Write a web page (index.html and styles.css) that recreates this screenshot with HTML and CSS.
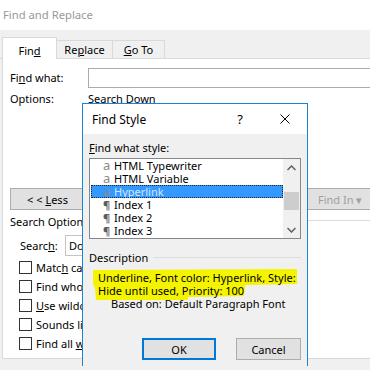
FILE: index.html
```html
<!DOCTYPE html>
<html>

<head>
  <title>Find and Replace</title>

  <link rel="stylesheet" href="styles.css">
</head>

<body>
  <div class="window">
    <div class="titlebar">Find and Replace</div>

    <div class="tabs">
      <div class="tab tab--active">Fin<u>d</u></div>
      <div class="tab tab--replace">Re<u>p</u>lace</div>
      <div class="tab tab--goto"><u>G</u>o To</div>
    </div>

    <div class="panel">
      <div class="field-grid">
        <label class="field-label">Fi<u>n</u>d what:</label>
        <div class="text-input"></div>
        <span class="field-label field-label--small">Options:</span>
        <span class="field-label field-label--small">Search Down</span>
      </div>

      <div class="button-row">
        <button class="btn btn--less">&lt; &lt; <u>L</u>ess</button>
        <button class="btn btn--findin" disabled>Find In &#9662;</button>
      </div>

      <!-- Search options group -->
      <div class="group-title">
        <span>Search Options</span>
        <span class="group-line"></span>
      </div>

      <div class="search-row">
        <span class="search-label">Searc<u>h</u>:</span>
        <div class="select">Down</div>
      </div>

      <ul class="check-list">
        <li><span class="checkbox"></span><span>Matc<u>h</u> case</span></li>
        <li><span class="checkbox"></span><span>Find whole words onl<u>y</u></span></li>
        <li><span class="checkbox"></span><span><u>U</u>se wildcards</span></li>
        <li><span class="checkbox"></span><span>Sounds li<u>k</u>e (English)</span></li>
        <li><span class="checkbox"></span><span>Find all <u>w</u>ord forms (English)</span></li>
      </ul>
    </div>
  </div>

  <!-- Find Style dialog, sits over the main window -->
  <div class="find-style">
    <div class="fs-titlebar">
      <span class="fs-title">Find Style</span>
      <span class="fs-help">?</span>
      <span class="fs-close">
        <svg width="10" height="10" viewBox="0 0 10 10">
          <path d="M0.5 0.5 L9.5 9.5 M9.5 0.5 L0.5 9.5" stroke="#000" stroke-width="1" fill="none" />
        </svg>
      </span>
    </div>

    <div class="fs-body">
      <label class="fs-label"><u>F</u>ind what style:</label>

      <div class="style-list">
        <ul class="style-items">
          <li class="style-item"><span class="style-icon style-icon--char">a</span>HTML Typewriter</li>
          <li class="style-item"><span class="style-icon style-icon--char">a</span>HTML Variable</li>
          <li class="style-item style-item--selected"><span class="style-icon style-icon--char">a</span>Hyperlink</li>
          <li class="style-item"><span class="style-icon style-icon--para">&para;</span>Index 1</li>
          <li class="style-item"><span class="style-icon style-icon--para">&para;</span>Index 2</li>
          <li class="style-item"><span class="style-icon style-icon--para">&para;</span>Index 3</li>
        </ul>
        <div class="scrollbar">
          <span class="scroll-arrow">
            <svg width="9" height="6" viewBox="0 0 9 6">
              <path d="M0.5 5 L4.5 1 L8.5 5" stroke="#606060" stroke-width="1.5" fill="none" />
            </svg>
          </span>
          <div class="scroll-track">
            <div class="scroll-thumb"></div>
          </div>
          <span class="scroll-arrow">
            <svg width="9" height="6" viewBox="0 0 9 6">
              <path d="M0.5 1 L4.5 5 L8.5 1" stroke="#606060" stroke-width="1.5" fill="none" />
            </svg>
          </span>
        </div>
      </div>

      <div class="desc-head">
        <span>Description</span>
        <span class="desc-line"></span>
      </div>

      <div class="desc-text">
        <svg class="marker" width="220" height="34" viewBox="0 -3 220 34">
          <path d="M4 -1 L208 -2 L208 13 L156 14 L155 25 L99 26 L99 29 L7 29 L6 17 L4 13 Z" fill="#f4f400" />
        </svg>
        <div>Underline, Font color: Hyperlink, Style:</div>
        <div>Hide until used, Priority: 100</div>
        <div class="desc-based">Based on: Default Paragraph Font</div>
      </div>

      <div class="fs-buttons">
        <button class="fs-btn fs-btn--ok">OK</button>
        <button class="fs-btn fs-btn--cancel">Cancel</button>
      </div>
    </div>
  </div>
</body>

</html>
```

FILE: styles.css
```css
* {
  margin: 0;
  padding: 0;
  box-sizing: border-box;
}

body {
  font-family: 'Noto Sans', sans-serif;
  font-size: 11px;
  color: #000;
  background-color: #fff;
}

:root {
  --face: #f0f0f0;
  --tab-border: #d9d9d9;
  --btn: #e1e1e1;
  --btn-border: #adadad;
  --accent: #0078d7;
}

u {
  text-underline-offset: 1px;
}

.window {
  position: relative;
  width: 370px;
  height: 370px;
  overflow: hidden;
  background-color: var(--face);
}

.titlebar {
  height: 30px;
  line-height: 30px;
  padding-left: 3px;
  background-color: #fff;
  color: #999;
  font-size: 11.25px;
}

/* Tabs */
.tabs {
  display: flex;
  align-items: flex-end;
  height: 29px;
  padding-left: 2px;
  border-bottom: 1px solid var(--tab-border);
}

.tab {
  height: 18px;
  line-height: 17px;
  text-align: center;
  border: 1px solid var(--tab-border);
  border-bottom: none;
  background-color: var(--face);
  margin-left: -1px;
}

.tab--active {
  width: 55px;
  height: 22px;
  padding-top: 4px;
  margin-left: 0;
  margin-bottom: -1px;
  background-color: #fff;
}

.tab--replace {
  width: 57px;
}

.tab--goto {
  width: 53px;
}

/* Tab page */
.panel {
  width: 420px;
  height: 300px;
  margin-left: 2px;
  padding: 9px 0 0 7px;
  background-color: #fff;
  border-left: 1px solid var(--tab-border);
  border-bottom: 1px solid var(--tab-border);
}

.field-grid {
  display: grid;
  grid-template-columns: 78px 1fr;
  row-gap: 2px;
}

.field-label {
  line-height: 20px;
}

.field-label--small {
  line-height: 18px;
}

.text-input {
  height: 20px;
  border: 1px solid #ababab;
  background-color: #fff;
}

.button-row {
  display: flex;
  gap: 215px;
  margin-top: 80px;
}

.btn {
  height: 22px;
  font: inherit;
  color: #000;
  background-color: var(--btn);
  border: 1px solid var(--btn-border);
}

.btn--less {
  width: 75px;
}

.btn--findin {
  width: 80px;
  text-align: left;
  padding-left: 17px;
  color: #a0a0a0;
}

.group-title {
  display: flex;
  align-items: center;
  margin-top: 4px;
  line-height: 16px;
}

.group-line {
  flex: 1;
  height: 1px;
  margin: -3px 0 0 6px;
  background-color: #dcdcdc;
}

.search-row {
  display: flex;
  align-items: center;
  margin-top: 5px;
  padding-left: 10px;
}

.search-label {
  width: 45px;
}

.select {
  width: 150px;
  height: 21px;
  line-height: 19px;
  padding-left: 3px;
  border: 1px solid #c4c4c4;
}

.check-list {
  list-style: none;
  margin-top: 2px;
  padding-left: 9px;
}

.check-list li {
  display: flex;
  align-items: center;
  gap: 4px;
  height: 19px;
  white-space: nowrap;
}

.checkbox {
  flex: none;
  width: 13px;
  height: 13px;
  border: 1px solid #333;
  background-color: #fff;
}

/* Find Style dialog */
.find-style {
  position: absolute;
  left: 82px;
  top: 103px;
  width: 226px;
  height: 263px;
  display: flex;
  flex-direction: column;
  background-color: var(--face);
  border: 1px solid #1883d7;
  border-bottom: none;
}

.fs-titlebar {
  display: flex;
  align-items: center;
  height: 30px;
  background-color: #fff;
}

.fs-title {
  flex: 1;
  padding-left: 9px;
  font-size: 12px;
}

.fs-help {
  width: 46px;
  text-align: center;
  font-size: 13px;
}

.fs-close {
  width: 44px;
  display: flex;
  justify-content: center;
}

.fs-body {
  flex: 1;
  display: flex;
  flex-direction: column;
  padding: 6px 6px 6px;
}

.fs-label {
  line-height: 16px;
}

.style-list {
  display: flex;
  height: 81px;
  margin-top: 2px;
  border: 1px solid #828790;
  background-color: #fff;
}

.style-items {
  flex: 1;
  list-style: none;
  padding-left: 1px;
}

.style-item {
  display: flex;
  height: 13px;
  line-height: 13px;
  padding-left: 12px;
  white-space: nowrap;
}

.style-item--selected {
  background-color: #3399ff;
  outline: 1px dotted #222;
  outline-offset: -1px;
  color: #d4e8fc;
}

.style-icon {
  width: 11px;
}

.style-icon--char {
  color: #8a8a8a;
  font-size: 13px;
}

.style-icon--para {
  color: #5c5c5c;
  font-weight: 700;
}

.scrollbar {
  width: 17px;
  display: flex;
  flex-direction: column;
  background-color: var(--face);
}

.scroll-arrow {
  height: 17px;
  display: flex;
  align-items: center;
  justify-content: center;
}

.scroll-track {
  flex: 1;
  padding: 16px 1px 0;
}

.scroll-thumb {
  height: 18px;
  background-color: #cdcdcd;
}

.desc-head {
  display: flex;
  align-items: center;
  margin-top: 11px;
  line-height: 16px;
}

.desc-line {
  flex: 1;
  height: 1px;
  margin: -2px 0 0 5px;
  background-color: #dcdcdc;
}

.desc-text {
  position: relative;
  z-index: 0;
  margin-top: 5px;
  padding-left: 9px;
  line-height: 13px;
  white-space: nowrap;
}

.marker {
  position: absolute;
  left: 0;
  top: -3px;
  z-index: -1;
}

.desc-based {
  padding-left: 13px;
}

.fs-buttons {
  display: flex;
  justify-content: flex-end;
  gap: 20px;
  margin-top: auto;
}

.fs-btn {
  height: 22px;
  font: inherit;
  color: #000;
  background-color: var(--btn);
  border: 1px solid var(--btn-border);
}

.fs-btn--ok {
  width: 74px;
  border: 2px solid var(--accent);
}

.fs-btn--cancel {
  width: 65px;
}
```
